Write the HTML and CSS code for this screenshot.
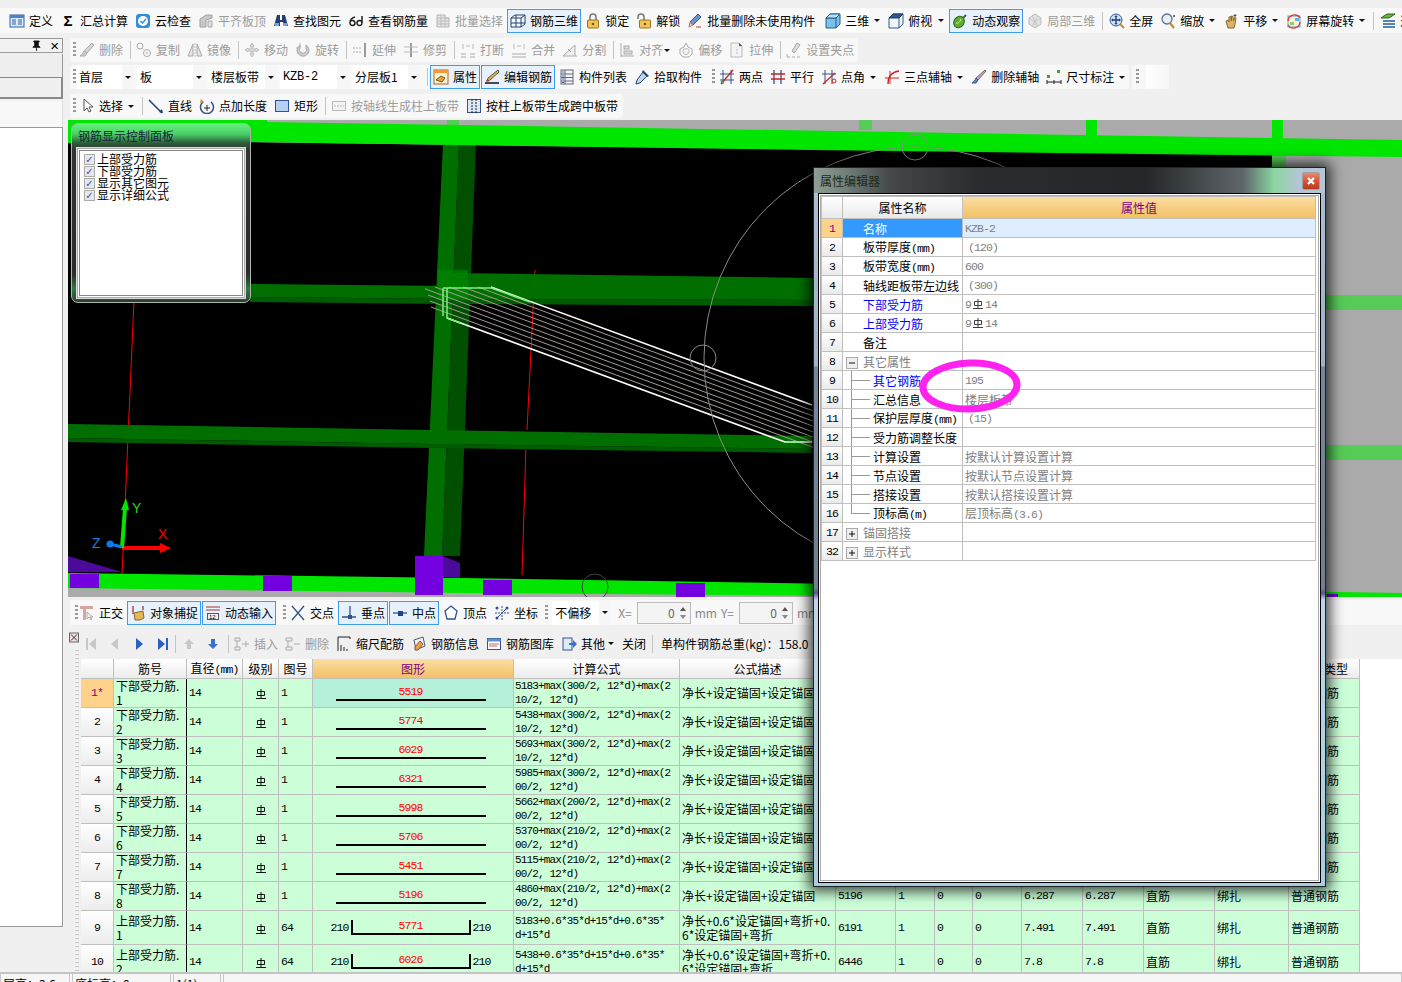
FILE: index.html
```html
<!DOCTYPE html>
<html lang="zh-CN">
<head>
<meta charset="utf-8">
<title>钢筋三维</title>
<link rel="stylesheet" href="styles.css">
</head>
<body>
<svg class="defs" width="0" height="0" aria-hidden="true">
<symbol id="def" viewBox="0 0 16 16"><rect x="1" y="2" width="14" height="12" fill="#dfe9f7" stroke="#2d5fa8"/><rect x="1" y="2" width="14" height="3" fill="#4c82c8"/><path d="M3 7h4M3 9h4M3 11h4M9 7h4M9 9h4M9 11h4" stroke="#2d5fa8"/></symbol>
<symbol id="cloud" viewBox="0 0 16 16"><rect x="1" y="1" width="14" height="14" rx="3" fill="#2f8fdd"/><circle cx="8" cy="8" r="5" fill="#fff"/><path d="M5.500 8l2 2 3.500-4" fill="none" stroke="#2f8fdd" stroke-width="1.500"/></symbol>
<symbol id="flat" viewBox="0 0 16 16"><path d="M2 14V6l6-4h6v3l-6 2v7z" fill="#c8c8c8" stroke="#a0a0a0"/><path d="M10 8h4v6h-4z" fill="#ddd" stroke="#aaa"/></symbol>
<symbol id="find" viewBox="0 0 16 16"><path d="M4 2h3v5h2V2h3l3 11h-5V9H7v4H1z" fill="#23406f"/><rect x="2" y="10" width="4" height="3" fill="#7fa3d6"/><rect x="10" y="10" width="4" height="3" fill="#7fa3d6"/></symbol>
<symbol id="glass" viewBox="0 0 16 16"><path d="M7 4C3 5 2 8 2 10a2.500 2.500 0 1 0 5 0 2.500 2.500 0 0 0-4-2M9 10a2.500 2.500 0 1 0 5 0 2.500 2.500 0 0 0-5 0M14 10V3" fill="none" stroke="#222" stroke-width="1.500"/></symbol>
<symbol id="batch" viewBox="0 0 16 16"><path d="M2 2h8v3h4v9H2z" fill="#e6e6e6" stroke="#b5b5b5"/><path d="M2 5h12M2 8h12M2 11h12M6 2v12M10 5v9" stroke="#bdbdbd"/></symbol>
<symbol id="r3d" viewBox="0 0 16 16"><path d="M1 5l4-3h10v9l-4 3H1z" fill="#f4f8ff" stroke="#26426f"/><path d="M1 5h10v9M11 5l4-3M6 2v12M1 10h14" fill="none" stroke="#26426f"/></symbol>
<symbol id="lock" viewBox="0 0 16 16"><path d="M5 7V4a3 3 0 0 1 6 0v3" fill="none" stroke="#777" stroke-width="1.500"/><rect x="2.500" y="7" width="11" height="8" rx="1" fill="#f0c456" stroke="#9a7416"/><circle cx="8" cy="11" r="1.300" fill="#7a5a10"/></symbol>
<symbol id="unlock" viewBox="0 0 16 16"><path d="M2 6V4a3 3 0 0 1 6 0v3" fill="none" stroke="#777" stroke-width="1.500"/><rect x="3.500" y="7" width="11" height="8" rx="1" fill="#f0c456" stroke="#9a7416"/><circle cx="9" cy="11" r="1.300" fill="#7a5a10"/></symbol>
<symbol id="bdel" viewBox="0 0 16 16"><path d="M11 1l3 3-8 8-3-3z" fill="#6d93cf" stroke="#35598f"/><path d="M3 9l3 3-4 2z" fill="#f2c9a0" stroke="#a77"/><path d="M9 14h5" stroke="#c33"/></symbol>
<symbol id="cube" viewBox="0 0 16 16"><path d="M1 5l4-4h10v10l-4 4H1z" fill="#7cc0e8" stroke="#1f5f8f"/><path d="M1 5h10l4-4M11 5v10" fill="none" stroke="#1f5f8f"/><path d="M1 5l4-4h10l-4 4z" fill="#b4e0f5" stroke="#1f5f8f"/></symbol>
<symbol id="top" viewBox="0 0 16 16"><path d="M1 5l4-4h10v10l-4 4H1z" fill="#eef5fb" stroke="#33597f"/><path d="M1 5l4-4h10l-4 4z" fill="#2c5a8c" stroke="#1f3f66"/><path d="M11 5v10" stroke="#33597f"/></symbol>
<symbol id="orbit" viewBox="0 0 16 16"><ellipse cx="7" cy="9" rx="5" ry="6" transform="rotate(35 7 9)" fill="#5fae2e" stroke="#2e6a14"/><path d="M11 5l3-3" stroke="#555" stroke-width="2"/><path d="M4 10c2 1 4-1 5-4" stroke="#cfeeb0" fill="none"/></symbol>
<symbol id="local" viewBox="0 0 16 16"><path d="M8 1l6 4v6l-6 4-6-4V5z" fill="#e3e3e3" stroke="#bbb"/><path d="M2 5l6 4 6-4M8 9v6M5 3l6 10M11 3L5 13" stroke="#c6c6c6" fill="none"/></symbol>
<symbol id="full" viewBox="0 0 16 16"><circle cx="7" cy="7" r="6" fill="#cfe0f5" stroke="#33598f"/><path d="M7 3v8M3 7h8" stroke="#1f3f7f" stroke-width="1.300"/><path d="M7 2l-1.500 2h3zM7 12l-1.500-2h3zM2 7l2-1.500v3zM12 7l-2-1.500v3z" fill="#1f3f7f"/><path d="M11 11l4 4" stroke="#c18a2a" stroke-width="2"/></symbol>
<symbol id="zoom" viewBox="0 0 16 16"><circle cx="7" cy="6" r="5" fill="#e8f1fb" stroke="#5c7390" stroke-width="1.300"/><path d="M10 10l4 5" stroke="#c18a2a" stroke-width="2.200"/><path d="M13 3h2M14 2v2" stroke="#444"/></symbol>
<symbol id="pan" viewBox="0 0 16 16"><path d="M3 8l2-1 1 2V4l1.500-.5L8.500 8V3l1.500.5.5 4.500 1-3.500 1.500.5L12 11l-1 4H5z" fill="#ddb36a" stroke="#8a6a2a"/><path d="M12 1v3M10.500 2.500h3" stroke="#555"/></symbol>
<symbol id="spin" viewBox="0 0 16 16"><rect x="2" y="3" width="12" height="11" fill="#f4f4d8" stroke="#6a9fc8"/><rect x="9" y="5" width="4" height="3" fill="#66b0e0"/><rect x="4" y="9" width="4" height="3" fill="#9c6"/><path d="M2 8a6.500 6.500 0 0 1 12-3M14 9a6.500 6.500 0 0 1-12 3" fill="none" stroke="#d33" stroke-width="1.300"/></symbol>
<symbol id="layer" viewBox="0 0 16 16"><path d="M1 5l6-4h8L9 5z" fill="#6cb04a" stroke="#2e6a14"/><path d="M3 8h12M3 11h12M3 14h12" stroke="#1f5f9f" stroke-width="1.500"/></symbol>
<symbol id="brush" viewBox="0 0 16 16"><path d="M13 1l2 2-7 8-3-2z" fill="#d5d5d5" stroke="#aaa"/><path d="M5 9l3 2-2 3H1c2-1 3-3 4-5z" fill="#ccc" stroke="#aaa"/></symbol>
<symbol id="copy" viewBox="0 0 16 16"><circle cx="4" cy="4" r="3" fill="none" stroke="#aaa"/><circle cx="11" cy="11" r="3.500" fill="none" stroke="#aaa"/><path d="M6 6l3 3" stroke="#bbb" stroke-dasharray="1 1"/><circle cx="11" cy="11" r="1" fill="#bbb"/></symbol>
<symbol id="mirror" viewBox="0 0 16 16"><path d="M1 14L6 2v12zM15 14L10 2v12z" fill="#e4e4e4" stroke="#aaa"/><path d="M8 1v14" stroke="#bbb" stroke-dasharray="2 1"/></symbol>
<symbol id="move" viewBox="0 0 16 16"><path d="M8 1l2 3H9v3h3V6l3 2-3 2V9H9v3h1l-2 3-2-3h1V9H4v1L1 8l3-2v1h3V4H6z" fill="#ddd" stroke="#aaa" stroke-width=".7"/></symbol>
<symbol id="rot" viewBox="0 0 16 16"><path d="M11 3a6 6 0 1 1-6 0v3a3.500 3.500 0 1 0 6 0z" fill="#ccc" stroke="#aaa"/><path d="M5 1v5H1" fill="none" stroke="#bbb"/></symbol>
<symbol id="ext" viewBox="0 0 16 16"><path d="M1 6h9M1 10h9" stroke="#aaa" stroke-dasharray="2 1"/><path d="M13 1v14" stroke="#999" stroke-width="2"/></symbol>
<symbol id="trim" viewBox="0 0 16 16"><path d="M8 1v14" stroke="#999" stroke-width="2"/><path d="M1 5h14M1 10h14" stroke="#bbb"/></symbol>
<symbol id="brk" viewBox="0 0 16 16"><path d="M1 12h5M10 12h5M1 15h5M10 15h5" stroke="#aaa"/><path d="M3 2v5M13 2v5M6 4h4" stroke="#bbb"/></symbol>
<symbol id="merge" viewBox="0 0 16 16"><path d="M1 12h14M1 15h14" stroke="#aaa"/><path d="M3 2v5M13 2v5M6 4h4" stroke="#bbb"/></symbol>
<symbol id="split" viewBox="0 0 16 16"><path d="M1 14h14M1 14L13 3v11" fill="#eee" stroke="#aaa"/><path d="M6 7l3 3" stroke="#999"/></symbol>
<symbol id="alignl" viewBox="0 0 16 16"><path d="M2 1v14M2 14h13" stroke="#aaa"/><rect x="5" y="4" width="5" height="3" fill="#ddd" stroke="#aaa"/><rect x="5" y="9" width="8" height="3" fill="#ddd" stroke="#aaa"/></symbol>
<symbol id="offs" viewBox="0 0 16 16"><path d="M8 1l2 4 4 2v5l-3 3H5l-3-3V7l4-2z" fill="none" stroke="#aaa"/><circle cx="8" cy="9.500" r="3" fill="none" stroke="#bbb"/></symbol>
<symbol id="strt" viewBox="0 0 16 16"><path d="M2 1h8l3 3v11H2z" fill="#f4f4f4" stroke="#bbb"/><path d="M10 1v3h3M8 7v6" stroke="#bbb" stroke-dasharray="2 1"/></symbol>
<symbol id="grip" viewBox="0 0 16 16"><path d="M11 1l3 2-6 8-2-2z" fill="#ddd" stroke="#aaa"/><path d="M1 15h3M6 15h3M11 15h3M1 15v-3" stroke="#aaa"/></symbol>
<symbol id="prop" viewBox="0 0 16 16"><rect x="1" y="1" width="14" height="14" fill="#fdf3d8" stroke="#b5621c"/><rect x="1" y="1" width="14" height="3" fill="#f19a38"/><path d="M3 11l5-4 4 2-3 4z" fill="#e0a82e" stroke="#7a5a10"/></symbol>
<symbol id="edit" viewBox="0 0 16 16"><path d="M1 14h14" stroke="#111" stroke-width="1.500"/><path d="M14 1l1 2-9 8-3 1 1-3z" fill="#e6b34a" stroke="#555"/><path d="M2 12h3" stroke="#c33"/></symbol>
<symbol id="list" viewBox="0 0 16 16"><rect x="2" y="1" width="12" height="14" fill="#f2f6fb" stroke="#667"/><path d="M6 1v14M2 5h12M2 8.500h12M2 12h12" stroke="#667"/><path d="M3 3h2M3 7h2M3 10h2M3 13.500h2" stroke="#36c"/></symbol>
<symbol id="pick" viewBox="0 0 16 16"><path d="M9 3l4 4-7 7-4 1 1-4z" fill="#bcd7f2" stroke="#26426f"/><path d="M9 1l6 6-2 1-5-5z" fill="#26426f"/></symbol>
<symbol id="twop" viewBox="0 0 16 16"><path d="M4 1v14M12 1v14M1 5h14M1 11h14" stroke="#33528f"/><path d="M2 15L14 1" stroke="#c22" stroke-width="1.300"/><circle cx="3" cy="13" r="1.300" fill="#3a3"/></symbol>
<symbol id="para" viewBox="0 0 16 16"><path d="M4 1v14M11 1v14" stroke="#33528f" stroke-width="1.300"/><path d="M1 5h14M1 10h14" stroke="#c22" stroke-width="1.300"/></symbol>
<symbol id="ang" viewBox="0 0 16 16"><path d="M4 1v14M11 1v14M1 5h14" stroke="#33528f"/><path d="M2 15L14 4" stroke="#c22" stroke-width="1.300"/><circle cx="13" cy="12" r="2" fill="none" stroke="#c22"/></symbol>
<symbol id="arc3" viewBox="0 0 16 16"><path d="M4 15C4 7 8 3 15 2" fill="none" stroke="#c22" stroke-width="1.300"/><path d="M1 9h14M6 2v13" stroke="#c22"/></symbol>
<symbol id="dbrush" viewBox="0 0 16 16"><path d="M14 1l1 1-8 9-2-2z" fill="#d9a6c8" stroke="#666"/><path d="M5 9l2 2-2 3H1c2-1 3-3 4-5z" fill="#6f8ec4" stroke="#33528f"/></symbol>
<symbol id="dim" viewBox="0 0 16 16"><rect x="11" y="1" width="3" height="3" fill="#3a3"/><rect x="1" y="6" width="3" height="3" fill="#3a3"/><path d="M1 13h14M1 11v4M15 11v4M8 11v4" stroke="#222"/></symbol>
<symbol id="cur" viewBox="0 0 16 16"><path d="M5 1v12l3-3 2 4 2-1-2-4h4z" fill="#fff" stroke="#555"/></symbol>
<symbol id="line" viewBox="0 0 16 16"><path d="M1 2l13 13" stroke="#1f3f6f" stroke-width="1.500"/><path d="M15 15l-1-4-3 3z" fill="#1f3f6f"/></symbol>
<symbol id="plen" viewBox="0 0 16 16"><path d="M4 4a6.500 6.500 0 1 0 8 0" fill="none" stroke="#33528f" stroke-width="1.500"/><path d="M8 7v6M5 10h6" stroke="#222"/><path d="M2 1l3 3-4 1z" fill="#e08a1e"/></symbol>
<symbol id="rect" viewBox="0 0 16 16"><rect x="1.500" y="2.500" width="13" height="11" fill="#b6d0f2" stroke="#33528f"/></symbol>
<symbol id="gen1" viewBox="0 0 16 16"><rect x="1.500" y="3.500" width="13" height="9" fill="#f2f2f2" stroke="#bbb"/><path d="M3 8h10" stroke="#bbb" stroke-dasharray="2 1"/></symbol>
<symbol id="gen2" viewBox="0 0 16 16"><rect x="1.500" y="1.500" width="13" height="13" fill="#dde8f6" stroke="#33528f"/><path d="M6 1v14M10 1v14" stroke="#222" stroke-dasharray="2 1"/></symbol>
<symbol id="ortho" viewBox="0 0 16 16"><path d="M1 1h13v3H7v11H4V4H1z" fill="#d9a5a0"/><path d="M8 7v7l2-2 2 3 1-1-2-2h3z" fill="#eee" stroke="#888" stroke-width=".6"/></symbol>
<symbol id="snap" viewBox="0 0 16 16"><path d="M3 1v8M13 1v4" stroke="#a33" stroke-width="1.300"/><path d="M4 8l9-2 1 7-4 2H5z" fill="#e0b85a" stroke="#8a6a2a"/></symbol>
<symbol id="dyn" viewBox="0 0 16 16"><path d="M1 2h14M1 5h14" stroke="#a33"/><rect x="2.500" y="8.500" width="11" height="6" fill="#eef" stroke="#555"/><text x="4" y="14" font-size="6" font-family="Liberation Sans">12</text></symbol>
<symbol id="xpt" viewBox="0 0 16 16"><path d="M2 1l12 14M14 1L2 15" stroke="#33528f" stroke-width="1.300"/></symbol>
<symbol id="perp" viewBox="0 0 16 16"><path d="M9 1v11M1 12h14" stroke="#33528f" stroke-width="1.300"/><rect x="7" y="10" width="4" height="4" fill="#33528f"/></symbol>
<symbol id="midp" viewBox="0 0 16 16"><path d="M1 8h14" stroke="#33528f" stroke-width="1.300"/><rect x="6" y="6" width="5" height="5" fill="#1f3f8f"/></symbol>
<symbol id="vert" viewBox="0 0 16 16"><path d="M8 1l6 5-2 8H4L2 6z" fill="#fff" stroke="#33528f" stroke-width="1.300"/></symbol>
<symbol id="coord" viewBox="0 0 16 16"><path d="M8 1v14M1 8h14" stroke="#33528f" stroke-dasharray="2 1"/><circle cx="3" cy="3" r="1.500" fill="#33528f"/><circle cx="13" cy="3" r="1.500" fill="#33528f"/><circle cx="3" cy="13" r="1.500" fill="#33528f"/><path d="M3 13L13 3" stroke="#33528f"/></symbol>
<symbol id="first" viewBox="0 0 16 16"><path d="M3 2h2v12H3zM13 2v12L6 8z" fill="#c8c8c8"/></symbol>
<symbol id="prev" viewBox="0 0 16 16"><path d="M11 2v12L4 8z" fill="#c8c8c8"/></symbol>
<symbol id="next" viewBox="0 0 16 16"><path d="M5 2v12l7-6z" fill="#2a5fc4"/></symbol>
<symbol id="last" viewBox="0 0 16 16"><path d="M3 2v12l7-6zM11 2h2v12h-2z" fill="#2a5fc4"/></symbol>
<symbol id="up" viewBox="0 0 16 16"><path d="M8 3l5 5h-3v5H6V8H3z" fill="#c8c8c8"/></symbol>
<symbol id="down" viewBox="0 0 16 16"><path d="M8 13l5-5h-3V3H6v5H3z" fill="#3a6fd0"/></symbol>
<symbol id="ins" viewBox="0 0 16 16"><path d="M1 2h5v3H1zM1 11h5v3H1z" fill="#eee" stroke="#aaa"/><path d="M3 5v6M8 8h7M12 5v6" stroke="#aaa"/></symbol>
<symbol id="rdel" viewBox="0 0 16 16"><path d="M1 2h6v3H1zM1 11h6v3H1z" fill="#eee" stroke="#aaa"/><path d="M3 5v6M9 8h6" stroke="#aaa"/></symbol>
<symbol id="scale" viewBox="0 0 16 16"><path d="M2 1v14M2 1h12M14 1v2M5 9v6M8 11v4M11 13v2" stroke="#222"/></symbol>
<symbol id="info" viewBox="0 0 16 16"><path d="M3 4l9-3 2 9-9 4z" fill="#eef" stroke="#556"/><path d="M9 5l3 3-5 6H4v-3z" fill="#e5a24a" stroke="#8a5a1a"/></symbol>
<symbol id="lib" viewBox="0 0 16 16"><rect x="1.500" y="2.500" width="13" height="11" fill="#fff" stroke="#33528f"/><rect x="1.500" y="2.500" width="13" height="3" fill="#5e8fd0"/><path d="M3 8h10M3 10h8" stroke="#c66"/></symbol>
<symbol id="other" viewBox="0 0 16 16"><rect x="2" y="2" width="9" height="12" fill="#dfe9f7" stroke="#33528f"/><path d="M8 7h4V4l4 4-4 4V9H8z" fill="#3a6fd0"/></symbol>
<symbol id="hrb" viewBox="0 0 12 12"><path d="M2.500 3.500h7v4h-7zM6 1v9M1 10.500h10" fill="none" stroke="#111"/></symbol>
<symbol id="minus" viewBox="0 0 12 12"><rect x=".5" y=".5" width="11" height="11" fill="#eee" stroke="#aaa"/><path d="M3 6h6" stroke="#111"/></symbol>
<symbol id="plus" viewBox="0 0 12 12"><rect x=".5" y=".5" width="11" height="11" fill="#eee" stroke="#aaa"/><path d="M3 6h6M6 3v6" stroke="#111"/></symbol>
</svg>

<div class="app">
  <div class="bar1">
    <div class="it"><svg class="i"><use href="#def"/></svg>定义</div>
    <div class="it"><span class="i sigma">Σ</span>汇总计算</div>
    <div class="it"><svg class="i"><use href="#cloud"/></svg>云检查</div>
    <div class="it off"><svg class="i"><use href="#flat"/></svg>平齐板顶</div>
    <div class="it"><svg class="i"><use href="#find"/></svg>查找图元</div>
    <div class="it"><svg class="i"><use href="#glass"/></svg>查看钢筋量</div>
    <div class="it off"><svg class="i"><use href="#batch"/></svg>批量选择</div>
    <div class="it on"><svg class="i"><use href="#r3d"/></svg>钢筋三维</div>
    <div class="it"><svg class="i"><use href="#lock"/></svg>锁定</div>
    <div class="it"><svg class="i"><use href="#unlock"/></svg>解锁</div>
    <div class="it"><svg class="i"><use href="#bdel"/></svg>批量删除未使用构件</div>
    <div class="it wgap"><svg class="i"><use href="#cube"/></svg>三维</div><span class="dd"></span>
    <div class="it"><svg class="i"><use href="#top"/></svg>俯视</div><span class="dd dd13"></span>
    <div class="it on"><svg class="i"><use href="#orbit"/></svg>动态观察</div>
    <div class="it off"><svg class="i"><use href="#local"/></svg>局部三维</div>
    <span class="sep"></span>
    <div class="it"><svg class="i"><use href="#full"/></svg>全屏</div>
    <div class="it"><svg class="i"><use href="#zoom"/></svg>缩放</div><span class="dd"></span>
    <div class="it"><svg class="i"><use href="#pan"/></svg>平移</div><span class="dd"></span>
    <div class="it"><svg class="i"><use href="#spin"/></svg>屏幕旋转</div><span class="dd"></span>
    <span class="sep"></span>
    <div class="it"><svg class="i"><use href="#layer"/></svg>选择楼层</div>
  </div>

  <div class="main">
    <aside class="dock">
      <div class="dock-title"><svg class="pin" viewBox="0 0 10 12"><path d="M2 1h6v1H7v4l2 2H1l2-2V2H2zM5 8v4" fill="#111" stroke="#111"/></svg><span class="dock-x">×</span></div>
      <div class="dock-a"></div>
      <div class="dock-b"></div>
      <div class="dock-c"></div>
      <div class="dock-list"></div>
    </aside>

    <div class="work">
      <div class="tb r2 off">
        <span class="grip"></span>
        <div class="it"><svg class="i"><use href="#brush"/></svg>删除</div><span class="sep"></span>
        <div class="it"><svg class="i"><use href="#copy"/></svg>复制</div>
        <div class="it"><svg class="i"><use href="#mirror"/></svg>镜像</div><span class="sep"></span>
        <div class="it"><svg class="i"><use href="#move"/></svg>移动</div>
        <div class="it"><svg class="i"><use href="#rot"/></svg>旋转</div><span class="sep"></span>
        <div class="it"><svg class="i"><use href="#ext"/></svg>延伸</div>
        <div class="it"><svg class="i"><use href="#trim"/></svg>修剪</div><span class="sep"></span>
        <div class="it"><svg class="i"><use href="#brk"/></svg>打断</div>
        <div class="it"><svg class="i"><use href="#merge"/></svg>合并</div>
        <div class="it"><svg class="i"><use href="#split"/></svg>分割</div><span class="sep"></span>
        <div class="it"><svg class="i"><use href="#alignl"/></svg>对齐</div><span class="dd small"></span>
        <div class="it"><svg class="i"><use href="#offs"/></svg>偏移</div>
        <div class="it"><svg class="i"><use href="#strt"/></svg>拉伸</div><span class="sep"></span>
        <div class="it"><svg class="i"><use href="#grip"/></svg>设置夹点</div>
      </div>

      <div class="r3">
        <div class="tb r3a">
          <span class="grip tight"></span>
          <div class="combos">
            <div class="combo c58">首层<span class="dd"></span></div>
            <div class="combo c68">板<span class="dd"></span></div>
            <div class="combo c69">楼层板带<span class="dd"></span></div>
            <div class="combo c69 m">KZB-2<span class="dd"></span></div>
            <div class="combo c68">分层板1<span class="dd"></span></div>
          </div>
          <span class="sep wide"></span>
          <div class="it on joined"><svg class="i"><use href="#prop"/></svg>属性</div>
          <div class="it on joined"><svg class="i"><use href="#edit"/></svg>编辑钢筋</div>
          <div class="it after"><svg class="i"><use href="#list"/></svg>构件列表</div>
          <div class="it"><svg class="i"><use href="#pick"/></svg>拾取构件</div>
          <span class="grip g2"></span>
          <div class="it"><svg class="i"><use href="#twop"/></svg>两点</div>
          <div class="it"><svg class="i"><use href="#para"/></svg>平行</div>
          <div class="it"><svg class="i"><use href="#ang"/></svg>点角</div><span class="dd"></span>
          <div class="it"><svg class="i"><use href="#arc3"/></svg>三点辅轴</div><span class="dd"></span>
          <div class="it"><svg class="i"><use href="#dbrush"/></svg>删除辅轴</div>
          <div class="it"><svg class="i"><use href="#dim"/></svg>尺寸标注</div><span class="dd"></span>
        </div>
        <div class="tb r3b"><span class="grip tight"></span><span class="blank"></span></div>
      </div>

      <div class="tb r4">
        <span class="grip"></span>
        <div class="it"><svg class="i"><use href="#cur"/></svg>选择</div><span class="dd"></span><span class="sep"></span>
        <div class="it"><svg class="i"><use href="#line"/></svg>直线</div>
        <div class="it"><svg class="i"><use href="#plen"/></svg>点加长度</div>
        <div class="it"><svg class="i"><use href="#rect"/></svg>矩形</div><span class="sep"></span>
        <div class="it off"><svg class="i"><use href="#gen1"/></svg>按轴线生成柱上板带</div>
        <div class="it"><svg class="i"><use href="#gen2"/></svg>按柱上板带生成跨中板带</div>
      </div>

      <div class="view">
        <svg class="scene" viewBox="68 120 1334 477" width="1334" height="477">
          <rect x="68" y="120" width="1334" height="477" fill="#aaa"/>
          <path d="M68 140L1272 155V592L68 575z" fill="#000"/>
          <path d="M222 120h11v8h-11zM447 120h12v8h-12zM859 120h13v10h-13z" fill="#57cb57"/>
          <path d="M1086 120h11v16h-11zM1272 120h11v20h-11z" fill="#00e600"/>
          <path d="M1272 150h14v450h-14z" fill="#57cb57"/>
          <path d="M134 300L122 575M535 270L527 430M526 445L522 575" stroke="#f00" fill="none"/>
          <path d="M443 143H459L442 556H424z" fill="#006f00"/>
          <path d="M459 143H476L460 556H442z" fill="#005000"/>
          <path d="M68 120H267V122L1402 140V157L812 150L250 142L68 143z" fill="#00e600"/>
          <path d="M250 284L452 286V273L812 278L1300 283V300L812 300L452 299L250 297z" fill="#006f00"/>
          <path d="M250 297L452 299L812 300L1300 300V306L812 306L452 304L250 302z" fill="#005c00"/>
          <path d="M438 270H468V300H438z" fill="#008c00" opacity=".6"/>
          <path d="M68 424L430 430L812 436V449L430 444L68 438z" fill="#006f00"/>
          <path d="M68 438L430 444L812 449V453L430 448L68 442z" fill="#005c00"/>
          <path d="M1320 295H1402V310H1320zM1320 445H1402V460H1320z" fill="#57cb57"/>
          <path d="M68 556L122 572H68z" fill="#4b0a99"/>
          <path d="M68 573L460 578L1402 593V597H1000L460 593L68 588z" fill="#00e600"/>
          <path d="M443 556L460 563V578L443 577z" fill="#4b0a99"/>
          <path d="M70 574h29v14H70zM263 576h29v15h-29zM415 556h28v39h-28zM483 580h29v15h-29zM676 583h29v14h-29zM1327 594h11v3h-11z" fill="#7400e0"/>
          <path d="M435 287L1000 495M449 287L1000 490M463 287L1000 485M478 287L1000 480M425 288.800L1000 501M428 295L1000 506M430 301L1000 511M431 307L1000 516" stroke="#a59a98" fill="none"/>
          <path d="M491 287L812 405M447 318L785 442H812" stroke="#fff" stroke-width="1.600" fill="none"/>
          <path d="M443 288H491L530 302M443 288V316M447 288V318L460 323M785 442L800 442" stroke="#7df07d" stroke-width="1.500" fill="none"/>
          <circle cx="915" cy="358" r="211" fill="none" stroke="#8a8a8a"/>
          <circle cx="915" cy="147" r="13" fill="none" stroke="#8a8a8a"/>
          <circle cx="703" cy="358" r="13" fill="none" stroke="#8a8a8a"/>
          <circle cx="595" cy="587" r="13" fill="none" stroke="#444"/>
          <path d="M122 548H165" stroke="#f00" stroke-width="4"/><path d="M160 543L171 548L160 553z" fill="#f00"/>
          <path d="M122 548L125 508" stroke="#00e600" stroke-width="4"/><path d="M121 510L126 498L129 510z" fill="#00e600"/>
          <path d="M122 547L110 544" stroke="#0a7cf0" stroke-width="3"/><circle cx="110" cy="544" r="3.500" fill="#0a7cf0"/>
          <text x="132" y="513" class="axis" fill="#22dd22">Y</text>
          <text x="158" y="539" class="axis" fill="#f00">X</text>
          <text x="92" y="548" class="axis" fill="#1c7fe0">Z</text>
        </svg>
        <div class="panel">
          <div class="panel-title">钢筋显示控制面板</div>
          <div class="panel-list">
            <div class="chk"><span class="box">✓</span>上部受力筋</div>
            <div class="chk"><span class="box">✓</span>下部受力筋</div>
            <div class="chk"><span class="box">✓</span>显示其它图元</div>
            <div class="chk"><span class="box">✓</span>显示详细公式</div>
          </div>
        </div>
      </div>

      <div class="snap">
        <span class="grip s"></span>
        <div class="it"><svg class="i"><use href="#ortho"/></svg>正交</div>
        <div class="it on joined first"><svg class="i"><use href="#snap"/></svg>对象捕捉</div>
        <div class="it on joined"><svg class="i"><use href="#dyn"/></svg>动态输入</div>
        <span class="grip g3"></span>
        <div class="it"><svg class="i"><use href="#xpt"/></svg>交点</div>
        <div class="it on joined first"><svg class="i"><use href="#perp"/></svg>垂点</div>
        <div class="it on joined"><svg class="i"><use href="#midp"/></svg>中点</div>
        <div class="it after"><svg class="i"><use href="#vert"/></svg>顶点</div>
        <div class="it"><svg class="i"><use href="#coord"/></svg>坐标</div>
        <span class="grip g3"></span>
        <div class="combo c59">不偏移<span class="dd"></span></div>
        <span class="lbl x">X=</span>
        <div class="num">0<span class="spin"></span></div>
        <span class="lbl">mm</span><span class="lbl">Y=</span>
        <div class="num">0<span class="spin"></span></div>
        <span class="lbl">mm</span>
      </div>

      <div class="rebar">
        <div class="rail"><svg class="rail-x" viewBox="0 0 10 10"><rect x=".5" y=".5" width="9" height="9" fill="#f4dcdc" stroke="#666"/><path d="M2 2l6 6M8 2L2 8" stroke="#333"/></svg></div>
        <div class="rebar-main">
          <div class="rb">
            <svg class="i"><use href="#first"/></svg><svg class="i"><use href="#prev"/></svg><svg class="i"><use href="#next"/></svg><svg class="i"><use href="#last"/></svg>
            <span class="sep sa"></span>
            <svg class="i"><use href="#up"/></svg><svg class="i"><use href="#down"/></svg>
            <span class="sep"></span>
            <div class="it off"><svg class="i"><use href="#ins"/></svg>插入</div>
            <div class="it off"><svg class="i"><use href="#rdel"/></svg>删除</div>
            <div class="it"><svg class="i"><use href="#scale"/></svg>缩尺配筋</div>
            <div class="it"><svg class="i"><use href="#info"/></svg>钢筋信息</div>
            <div class="it"><svg class="i"><use href="#lib"/></svg>钢筋图库</div>
            <div class="it"><svg class="i"><use href="#other"/></svg>其他</div><span class="dd small"></span>
            <div class="it">关闭</div>
            <span class="sep"></span>
            <div class="it tot">单构件钢筋总重(kg)：158.0</div>
          </div>
          <div class="grid-wrap">
            <table class="grid">
              <colgroup><col class="k1"><col class="k2"><col class="k3"><col class="k4"><col class="k5"><col class="k6"><col class="k7"><col class="k8"><col class="k9"><col class="k10"><col class="k11"><col class="k12"><col class="k13"><col class="k14"><col class="k15"><col class="k16"><col class="k17"></colgroup>
              <thead><tr><th></th><th>筋号</th><th>直径<span class="m">(mm)</span></th><th>级别</th><th>图号</th><th class="hot">图形</th><th>计算公式</th><th>公式描述</th><th>长度<span class="m">(mm)</span></th><th>根数</th><th>搭接</th><th>损耗<span class="m">(%)</span></th><th>单重<span class="m">(kg)</span></th><th>总重<span class="m">(kg)</span></th><th>钢筋归类</th><th>搭接形式</th><th>钢筋类型</th></tr></thead>
              <tbody>
<tr><th class="cur m">1*</th><td>下部受力筋.<br>1</td><td class="m bl">14</td><td class="ctr"><svg class="hrb"><use href="#hrb"/></svg></td><td class="m">1</td><td class="sh sel"><span class="v">5519</span><span class="ln"></span></td><td class="m f">5183+max(300/2, 12*d)+max(2<br>10/2, 12*d)</td><td>净长+设定锚固+设定锚固</td><td class="m">5183</td><td class="m">1</td><td class="m">0</td><td class="m">0</td><td class="m">6.678</td><td class="m">6.678</td><td>直筋</td><td>绑扎</td><td>普通钢筋</td></tr>
<tr><th class="m">2</th><td>下部受力筋.<br>2</td><td class="m bl">14</td><td class="ctr"><svg class="hrb"><use href="#hrb"/></svg></td><td class="m">1</td><td class="sh"><span class="v">5774</span><span class="ln"></span></td><td class="m f">5438+max(300/2, 12*d)+max(2<br>10/2, 12*d)</td><td>净长+设定锚固+设定锚固</td><td class="m">5774</td><td class="m">1</td><td class="m">0</td><td class="m">0</td><td class="m">6.987</td><td class="m">6.987</td><td>直筋</td><td>绑扎</td><td>普通钢筋</td></tr>
<tr><th class="m">3</th><td>下部受力筋.<br>3</td><td class="m bl">14</td><td class="ctr"><svg class="hrb"><use href="#hrb"/></svg></td><td class="m">1</td><td class="sh"><span class="v">6029</span><span class="ln"></span></td><td class="m f">5693+max(300/2, 12*d)+max(2<br>10/2, 12*d)</td><td>净长+设定锚固+设定锚固</td><td class="m">6029</td><td class="m">1</td><td class="m">0</td><td class="m">0</td><td class="m">7.295</td><td class="m">7.295</td><td>直筋</td><td>绑扎</td><td>普通钢筋</td></tr>
<tr><th class="m">4</th><td>下部受力筋.<br>4</td><td class="m bl">14</td><td class="ctr"><svg class="hrb"><use href="#hrb"/></svg></td><td class="m">1</td><td class="sh"><span class="v">6321</span><span class="ln"></span></td><td class="m f">5985+max(300/2, 12*d)+max(2<br>00/2, 12*d)</td><td>净长+设定锚固+设定锚固</td><td class="m">6321</td><td class="m">1</td><td class="m">0</td><td class="m">0</td><td class="m">7.648</td><td class="m">7.648</td><td>直筋</td><td>绑扎</td><td>普通钢筋</td></tr>
<tr><th class="m">5</th><td>下部受力筋.<br>5</td><td class="m bl">14</td><td class="ctr"><svg class="hrb"><use href="#hrb"/></svg></td><td class="m">1</td><td class="sh"><span class="v">5998</span><span class="ln"></span></td><td class="m f">5662+max(200/2, 12*d)+max(2<br>00/2, 12*d)</td><td>净长+设定锚固+设定锚固</td><td class="m">5998</td><td class="m">1</td><td class="m">0</td><td class="m">0</td><td class="m">7.258</td><td class="m">7.258</td><td>直筋</td><td>绑扎</td><td>普通钢筋</td></tr>
<tr><th class="m">6</th><td>下部受力筋.<br>6</td><td class="m bl">14</td><td class="ctr"><svg class="hrb"><use href="#hrb"/></svg></td><td class="m">1</td><td class="sh"><span class="v">5706</span><span class="ln"></span></td><td class="m f">5370+max(210/2, 12*d)+max(2<br>00/2, 12*d)</td><td>净长+设定锚固+设定锚固</td><td class="m">5706</td><td class="m">1</td><td class="m">0</td><td class="m">0</td><td class="m">6.904</td><td class="m">6.904</td><td>直筋</td><td>绑扎</td><td>普通钢筋</td></tr>
<tr><th class="m">7</th><td>下部受力筋.<br>7</td><td class="m bl">14</td><td class="ctr"><svg class="hrb"><use href="#hrb"/></svg></td><td class="m">1</td><td class="sh"><span class="v">5451</span><span class="ln"></span></td><td class="m f">5115+max(210/2, 12*d)+max(2<br>00/2, 12*d)</td><td>净长+设定锚固+设定锚固</td><td class="m">5451</td><td class="m">1</td><td class="m">0</td><td class="m">0</td><td class="m">6.596</td><td class="m">6.596</td><td>直筋</td><td>绑扎</td><td>普通钢筋</td></tr>
<tr><th class="m">8</th><td>下部受力筋.<br>8</td><td class="m bl">14</td><td class="ctr"><svg class="hrb"><use href="#hrb"/></svg></td><td class="m">1</td><td class="sh"><span class="v">5196</span><span class="ln"></span></td><td class="m f">4860+max(210/2, 12*d)+max(2<br>00/2, 12*d)</td><td>净长+设定锚固+设定锚固</td><td class="m">5196</td><td class="m">1</td><td class="m">0</td><td class="m">0</td><td class="m">6.287</td><td class="m">6.287</td><td>直筋</td><td>绑扎</td><td>普通钢筋</td></tr>
<tr class="tall"><th class="m">9</th><td>上部受力筋.<br>1</td><td class="m bl">14</td><td class="ctr"><svg class="hrb"><use href="#hrb"/></svg></td><td class="m">64</td><td class="sh u"><span class="m">210</span><span class="ubox"><span class="v">5771</span></span><span class="m">210</span></td><td class="m f">5183+0.6*35*d+15*d+0.6*35*<br>d+15*d</td><td class="d2">净长+0.6*设定锚固+弯折+0.<br>6*设定锚固+弯折</td><td class="m">6191</td><td class="m">1</td><td class="m">0</td><td class="m">0</td><td class="m">7.491</td><td class="m">7.491</td><td>直筋</td><td>绑扎</td><td>普通钢筋</td></tr>
<tr class="tall"><th class="m">10</th><td>上部受力筋.<br>2</td><td class="m bl">14</td><td class="ctr"><svg class="hrb"><use href="#hrb"/></svg></td><td class="m">64</td><td class="sh u"><span class="m">210</span><span class="ubox"><span class="v">6026</span></span><span class="m">210</span></td><td class="m f">5438+0.6*35*d+15*d+0.6*35*<br>d+15*d</td><td class="d2">净长+0.6*设定锚固+弯折+0.<br>6*设定锚固+弯折</td><td class="m">6446</td><td class="m">1</td><td class="m">0</td><td class="m">0</td><td class="m">7.8</td><td class="m">7.8</td><td>直筋</td><td>绑扎</td><td>普通钢筋</td></tr>
              </tbody>
            </table>
          </div>
        </div>
      </div>
    </div>
  </div>

  <div class="status"><span class="s1">层高：3.6</span><span class="s2">底标高：0</span><span class="s3">1(1)</span><span class="s4"></span></div>

  <div class="dialog">
    <div class="dlg-title"><span>属性编辑器</span><span class="dlg-close"><svg viewBox="0 0 10 10" width="10" height="10"><path d="M2 2l6 6M8 2l-6 6" stroke="#fff" stroke-width="2.200"/></svg></span></div>
    <div class="dlg-body">
      <table class="pg">
        <colgroup><col class="p1"><col class="p2"><col class="p3"></colgroup>
        <thead><tr><th></th><th>属性名称</th><th class="hot">属性值</th></tr></thead>
        <tbody>
<tr class="act"><th class="m">1</th><td class="n">名称</td><td class="val m">KZB-2</td></tr>
<tr><th class="m">2</th><td class="n">板带厚度<span class="m">(mm)</span></td><td class="val m in">(120)</td></tr>
<tr><th class="m">3</th><td class="n">板带宽度<span class="m">(mm)</span></td><td class="val m">600</td></tr>
<tr><th class="m">4</th><td class="n">轴线距板带左边线</td><td class="val m in">(300)</td></tr>
<tr><th class="m">5</th><td class="n link">下部受力筋</td><td class="val m">9<svg class="hrb g"><use href="#hrb"/></svg>14</td></tr>
<tr><th class="m">6</th><td class="n link">上部受力筋</td><td class="val m">9<svg class="hrb g"><use href="#hrb"/></svg>14</td></tr>
<tr><th class="m">7</th><td class="n">备注</td><td class="val"></td></tr>
<tr><th class="m">8</th><td class="node"><svg class="nb"><use href="#minus"/></svg>其它属性</td><td class="val"></td></tr>
<tr><th class="m">9</th><td class="c link">其它钢筋</td><td class="val m">195</td></tr>
<tr><th class="m">10</th><td class="c">汇总信息</td><td class="val">楼层板带</td></tr>
<tr><th class="m">11</th><td class="c">保护层厚度<span class="m">(mm)</span></td><td class="val m in">(15)</td></tr>
<tr><th class="m">12</th><td class="c">受力筋调整长度</td><td class="val"></td></tr>
<tr><th class="m">13</th><td class="c">计算设置</td><td class="val">按默认计算设置计算</td></tr>
<tr><th class="m">14</th><td class="c">节点设置</td><td class="val">按默认节点设置计算</td></tr>
<tr><th class="m">15</th><td class="c">搭接设置</td><td class="val">按默认搭接设置计算</td></tr>
<tr><th class="m">16</th><td class="c end">顶标高<span class="m">(m)</span></td><td class="val">层顶标高<span class="m">(3.6)</span></td></tr>
<tr><th class="m">17</th><td class="node"><svg class="nb"><use href="#plus"/></svg>锚固搭接</td><td class="val"></td></tr>
<tr><th class="m">32</th><td class="node"><svg class="nb"><use href="#plus"/></svg>显示样式</td><td class="val"></td></tr>
        </tbody>
      </table>
    </div>
    <svg class="ring" viewBox="0 0 110 60" width="110" height="60"><ellipse cx="55" cy="30" rx="47" ry="23" fill="none" stroke="#ff22ee" stroke-width="7" transform="rotate(-2 55 30)"/></svg>
  </div>
</div>
</body>
</html>
```

FILE: styles.css
```css
* { box-sizing: border-box; }
html, body { margin: 0; height: 100%; }
body { width: 1402px; height: 982px; overflow: hidden; background: #f0f0f0; font: 12px/16px "Noto Sans CJK SC", "Liberation Sans", sans-serif; color: #000; }
.defs { position: absolute; }
.app { position: relative; width: 1402px; height: 982px; display: flex; flex-direction: column; overflow: hidden; }
.i { width: 16px; height: 16px; flex: none; display: block; }
.m { font-family: "Liberation Mono", "Noto Sans CJK SC", monospace; font-size: 11.500px; letter-spacing: -.9px; }

.it { display: flex; align-items: center; gap: 4px; white-space: nowrap; flex: none; height: 22px; }
.off, .off .it { color: #9c9c9c; }
.on { border: 1px solid #3f9bf0; background: #e6f1fb; padding: 0 2px; height: 24px; margin: 0 -3px; }
.joined { margin: 0; }
.joined + .joined { margin-left: -6px; }
.joined.first { margin-left: -3px; }
.after { margin-left: -3px; }
.sep { width: 1px; height: 18px; background: #c4c4c4; flex: none; margin-right: -2px; }
.bar1 .sep { margin-right: -1px; }
.sep.wide { margin-right: -5px; }
.dd { width: 12px; height: 16px; flex: none; margin-left: -7px; display: flex; align-items: center; justify-content: flex-end; }
.dd::after { content: ""; border: 3px solid transparent; border-top: 3px solid #111; border-bottom: 0; margin-right: 1px; }
.dd.small { width: 8px; }
.dd.dd13 { width: 13px; }
.grip { width: 3px; height: 16px; flex: none; margin-right: -4px; background: repeating-linear-gradient(#999 0 2px, transparent 2px 4px); }
.grip.tight { margin-right: -7px; }
.grip.g2 { margin-left: 3px; margin-right: -3px; }
.grip.s { margin-right: -6px; }
.grip.g3 { margin-right: -3px; }

.bar1 { height: 25px; margin-top: 8px; padding-left: 9px; display: flex; align-items: center; gap: 7px; background: #f8f8f8; }
.sigma { font: bold 15px/16px "Liberation Sans", sans-serif; text-align: center; }
.wgap { margin-left: 3px; background: #fff; }

.main { flex: none; height: 939px; display: flex; }
.dock { width: 63px; margin: 5px 5px 0 0; flex: none; display: flex; flex-direction: column; }
.dock-title { height: 15px; border: 1px solid #999; border-left: 0; display: flex; align-items: center; justify-content: flex-end; padding-right: 3px; gap: 9px; background: #f2f2f2; }
.pin { width: 9px; height: 11px; }
.dock-x { font: 15px/12px "Liberation Sans", sans-serif; }
.dock-a { height: 23px; border-right: 1px solid #999; background: #eee; margin-top: 1px; }
.dock-b { height: 22px; border: 1px solid #888; border-width: 1px 2px 2px 0; background: #f0f0f0; }
.dock-c { height: 26px; background: #f8f8f8; border-right: 1px solid #ddd; margin-top: 2px; }
.dock-list { height: 800px; background: #fff; border: 1px solid #999; border-left: 0; }

.work { width: 1334px; flex: none; padding-top: 5px; display: flex; flex-direction: column; }
.tb { display: flex; align-items: center; gap: 7px; background: #f8f8f8; border-radius: 3px; width: max-content; }
.r2 { height: 24px; margin-left: 2px; padding: 0 4px 0 3px; }
.r3 { display: flex; margin: 3px 0 0 2px; }
.r3a { height: 24px; padding: 0 3px 0 3px; }
.r3b { height: 24px; padding: 0 0 0 4px; margin-left: 3px; }
.blank { width: 23px; height: 24px; background: linear-gradient(90deg, #fff, #f6f6f6); margin-left: 7px; }
.r4 { height: 24px; margin: 5px 0 0 2px; padding: 0 5px 0 3px; }
.combos { display: flex; gap: 3px; }
.combo { height: 24px; background: #fff; display: flex; align-items: center; padding-left: 3px; justify-content: space-between; flex: none; white-space: nowrap; }
.combo .dd { margin: 0; height: 24px; width: 12px; background: #f6f6f6; }
.combo .dd::after { margin-right: 3px; }
.c58 { width: 58px; } .c69 { width: 69px; } .c68 { width: 68px; } .c59 { width: 59px; }
.combos .m { font-size: 12px; letter-spacing: -.2px; }

.view { position: relative; height: 477px; margin-top: 2px; background: #aaa; flex: none; }
.scene { display: block; }
.axis { font: 14px "Liberation Sans", sans-serif; }
.panel { position: absolute; left: 3px; top: 3px; width: 180px; height: 180px; border: 1px solid #aab5ac; border-radius: 7px; padding: 3px 5px 5px; background: linear-gradient(#63f07c 0, #4bd068 10px, #2d5e3a 19px, #333 26px, #2c2c2c 150px, #2e7a40 165px, #2f3f33 178px); }
.panel-title { height: 21px; line-height: 17px; padding-left: 1px; color: #123; }
.panel-list { height: 150px; background: #fff; border: 1px solid #aaa; outline: 1px solid #ddd; box-shadow: inset 0 0 0 1px #fff, inset 0 0 0 2px #888; padding: 4px 0 0 6px; }
.chk { height: 12px; line-height: 12px; display: flex; align-items: center; gap: 2px; white-space: nowrap; }
.box { width: 11px; height: 11px; border: 1px solid #aaa; background: #e6e6ee; color: #33559a; font: bold 10px/10px "DejaVu Sans", sans-serif; text-align: center; flex: none; }

.snap { height: 25px; margin: 3px 0 0 2px; padding: 0 0 0 5px; display: flex; align-items: center; gap: 7px; background: #f8f8f8; }
.lbl { color: #888; font-size: 12px; margin-left: -3px; flex: none; white-space: nowrap; }
.lbl.x { margin-left: 0; }
.num { width: 54px; height: 22px; border: 1px solid #bbb; background: #f4f4f4; display: flex; justify-content: flex-end; align-items: center; gap: 4px; padding-right: 2px; color: #666; flex: none; margin-left: -2px; }
.spin { width: 9px; height: 16px; position: relative; }
.spin::before { content: ""; position: absolute; top: 2px; left: 1px; border: 3px solid transparent; border-bottom: 4px solid #555; border-top: 0; }
.spin::after { content: ""; position: absolute; bottom: 2px; left: 1px; border: 3px solid transparent; border-top: 4px solid #888; border-bottom: 0; }

.rebar { display: flex; margin-top: 7px; height: 340px; }
.rail { width: 13px; flex: none; padding-left: 1px; background: repeating-linear-gradient(#f0f0f0 0 3px, #c9c9c9 3px 4px) 7px 15px / 4px 100% no-repeat; }
.rail-x { width: 10px; height: 11px; display: block; }
.rebar-main { width: 1321px; }
.rb { height: 23px; display: flex; align-items: center; gap: 7px; padding-left: 2px; }
.rb > .i { margin-right: 1px; }
.rb .sep { margin-left: -1px; }
.rb .sep.sa { margin-left: -4px; }
.rb .dd.small { width: 10px; }
.tot { margin-left: 3px; }
.grid-wrap { margin-top: 4px; height: 313px; overflow: hidden; background: #fff; }
.grid { table-layout: fixed; width: 1279px; border-collapse: separate; border-spacing: 0; }
.k1 { width: 33px; } .k2 { width: 73px; } .k3 { width: 56px; } .k4 { width: 36px; } .k5 { width: 34px; } .k6 { width: 201px; } .k7 { width: 166px; } .k8 { width: 156px; } .k9 { width: 60px; } .k10 { width: 39px; } .k11 { width: 38px; } .k12 { width: 49px; } .k13 { width: 61px; } .k14 { width: 61px; } .k15 { width: 71px; } .k16 { width: 74px; } .k17 { width: 71px; }
.grid thead tr { height: 20px; }
.grid tbody tr { height: 29px; }
.grid tr.tall { height: 34px; }
.grid th, .grid td { border: solid #bfbfbf; border-width: 0 1px 1px 0; padding: 0 2px; overflow: hidden; white-space: nowrap; line-height: 14px; }
.grid th { font-weight: 400; background: linear-gradient(#fff, #ececec); text-align: center; }
.grid td { background: #ccffd8; }
.grid th.hot, .pg th.hot { background: linear-gradient(#fbdda3, #f2c164); color: #800080; }
.grid th.cur { background: #ffd28c; color: #800080; }
.bl { border-right-color: #bfbfbf; }
.grid td:nth-child(2) { border-right-color: #000; }
.grid .ctr { text-align: center; }
.hrb { width: 12px; height: 12px; vertical-align: -2px; }
.hrb.g { margin: 0 1px; opacity: .8; }
.grid .f { line-height: 14px; padding-left: 1px; font-size: 11px; letter-spacing: -.85px; }
.grid .sh { text-align: center; padding: 0 5px 0 0; }
.grid .sel { background: #b5f0d8; }
.v { display: block; color: #f00; font: 11.500px/14px "Liberation Mono", monospace; letter-spacing: -.9px; }
.ln { display: block; width: 150px; height: 2px; background: #000; margin: 0 auto; }
.grid .u { font-size: 0; }
.u .m { display: inline-block; width: 22px; vertical-align: middle; }
.ubox { display: inline-block; width: 120px; height: 15px; border: solid #000; border-width: 0 2px 2px; vertical-align: middle; }
.ubox .v { line-height: 12px; }

.status { height: 10px; display: flex; gap: 2px; border-top: 2px solid #c4c4c4; background: #f6f6f6; overflow: hidden; line-height: 20px; flex: none; }
.status span { border-right: 1px solid #c8c8c8; border-left: 1px solid #c8c8c8; white-space: nowrap; padding-left: 2px; }
.s1 { width: 70px; } .s2 { width: 99px; } .s3 { width: 48px; } .s4 { flex: 1; }

.dialog { position: absolute; left: 813px; top: 167px; width: 513px; height: 720px; border: 1px solid #222; padding: 0 4px 4px; background: linear-gradient(#aebfd2 0, #9fb2c6 198px, #75879a 199px, #6f8090 420px, #6a4aa0 425px, #bcd5ea 432px, #a9cde0 100%); box-shadow: 0 0 13px 4px rgba(0, 0, 0, .75); }
.dlg-title { height: 25px; margin: 0 -4px; padding: 0 5px 0 6px; display: flex; align-items: center; justify-content: space-between; color: #1a2a1a; background: linear-gradient(90deg, #8f9f95 0, #72807a 6%, #44484a 15%, #2a2d30 32%, #242729 65%, #5f666a 84%, #8ad6a0 90%, #b4c6d6 95%); }
.dlg-close { width: 18px; height: 18px; border: 1px solid #a0a0a0; border-radius: 2px; background: linear-gradient(#e98a70, #d8553a 50%, #b83a1e); display: flex; align-items: center; justify-content: center; }
.dlg-body { height: 690px; border: 1px solid #000; background: #fff; padding: 2px 0 0 2px; box-shadow: inset 0 0 0 1px #fff, inset 0 0 0 2px #aaa; }
.pg { table-layout: fixed; width: 495px; border-collapse: separate; border-spacing: 0; }
.p1 { width: 22px; } .p2 { width: 120px; }
.pg thead tr { height: 23px; }
.pg tbody tr { height: 19px; }
.pg th, .pg td { border: solid #bfbfbf; border-width: 0 1px 1px 0; padding: 0; overflow: hidden; white-space: nowrap; line-height: 14px; }
.pg tbody td, .pg tbody th { padding-top: 1px; }
.pg tr > :first-child { border-left: 1px solid #bfbfbf; }
.pg th { font-weight: 400; background: linear-gradient(#fff, #eaeaea); text-align: center; }
.pg thead th { border-top: 1px solid #bfbfbf; }
.pg .n { padding-left: 20px; }
.pg .link { color: #00f; }
.pg .val { color: #808080; padding-left: 2px; }
.pg .in { padding-left: 5px; }
.pg .node { color: #808080; padding-left: 3px; }
.nb { width: 12px; height: 12px; vertical-align: -2px; margin-right: 5px; }
.pg .c { padding-left: 30px; background: linear-gradient(#999, #999) 8px 0 / 1px 100% no-repeat, linear-gradient(#999, #999) 8px 9px / 19px 1px no-repeat; }
.pg .c.end { background: linear-gradient(#999, #999) 8px 0 / 1px 10px no-repeat, linear-gradient(#999, #999) 8px 9px / 19px 1px no-repeat; }
.pg .act th { background: #ffd28c; color: #800080; }
.pg .act .n { background: #3399ff; color: #fff; }
.pg .act .val { background: #deeeff; }
.ring { position: absolute; left: 101px; top: 188px; }
```
